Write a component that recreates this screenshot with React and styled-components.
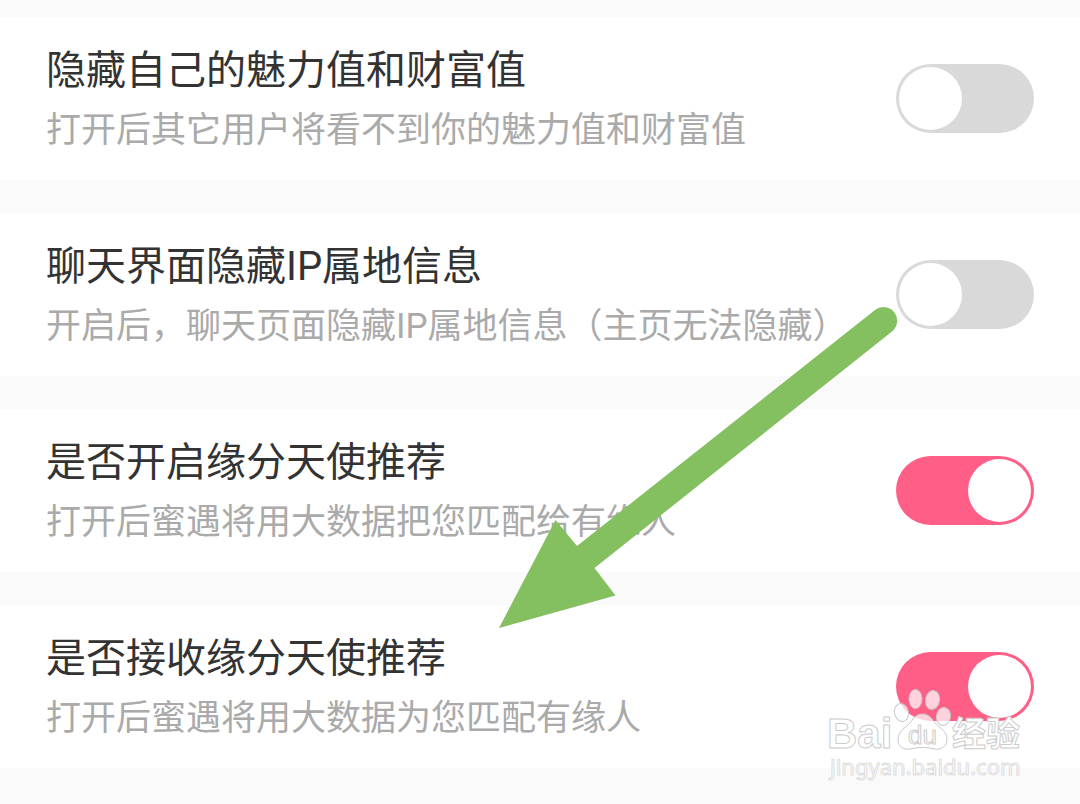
import React, { useState } from 'react';
import styled, { createGlobalStyle } from 'styled-components';

// Styles
const GlobalStyle = createGlobalStyle`
  * {
    box-sizing: border-box;
  }

  body {
    margin: 0;
    background: #fafafa;
    font-family: Roboto, 'Noto Sans CJK SC', sans-serif;
  }
`;

const Page = styled.main`
  position: relative;
  min-height: 100vh;
  padding: 17px 0 36px;
  overflow: hidden;
`;

const SettingList = styled.div`
  display: flex;
  flex-direction: column;
  gap: 33px;
`;

const SettingRow = styled.section`
  display: flex;
  justify-content: space-between;
  align-items: center;
  gap: 24px;
  padding: 18px 46px 19px;
  background: #ffffff;
`;

const SettingText = styled.div`
  flex: 1;
  min-width: 0;
  padding-top: 6px;
`;

const Title = styled.label`
  display: block;
  font-size: 40px;
  line-height: 60px;
  color: #333333;
`;

const Description = styled.p`
  margin: 0;
  font-size: 35px;
  line-height: 60px;
  color: #aaaaaa;
`;

const Switch = styled.input`
  appearance: none;
  flex: none;
  display: flex;
  justify-content: ${({ checked }) => (checked ? 'flex-end' : 'flex-start')};
  width: 138px;
  height: 69px;
  margin: 0;
  padding: 3px;
  border-radius: 35px;
  background: ${({ checked }) => (checked ? '#ff5f87' : '#d9d9d9')};
  cursor: pointer;

  &::before {
    content: '';
    width: 63px;
    height: 63px;
    border-radius: 50%;
    background: #ffffff;
  }
`;

const Arrow = styled.svg`
  position: absolute;
  top: 300px;
  left: 490px;
  pointer-events: none;
`;

const Watermark = styled.svg`
  position: absolute;
  right: 52px;
  bottom: 16px;
  pointer-events: none;
`;

const WatermarkText = styled.text`
  font-family: ${({ $family }) => $family || "'Liberation Sans'"}, sans-serif;
  font-size: ${({ $size }) => $size}px;
  font-weight: ${({ $weight }) => $weight || 700};
  fill: #ffffff;
  stroke: ${({ $stroke }) => $stroke || '#cccccc'};
  stroke-width: ${({ $outline }) => $outline || 1}px;
  stroke-linejoin: round;
`;

const settings = [
  {
    id: 'hide-charm',
    title: '隐藏自己的魅力值和财富值',
    description: '打开后其它用户将看不到你的魅力值和财富值',
    on: false,
  },
  {
    id: 'hide-ip',
    title: '聊天界面隐藏IP属地信息',
    description: '开启后，聊天页面隐藏IP属地信息（主页无法隐藏）',
    on: false,
  },
  {
    id: 'angel-recommend',
    title: '是否开启缘分天使推荐',
    description: '打开后蜜遇将用大数据把您匹配给有缘人',
    on: true,
  },
  {
    id: 'angel-receive',
    title: '是否接收缘分天使推荐',
    description: '打开后蜜遇将用大数据为您匹配有缘人',
    on: true,
  },
];

const Setting = ({ id, title, description, on }) => {
  const [checked, setChecked] = useState(on);

  return (
    <SettingRow>
      <SettingText>
        <Title htmlFor={id}>{title}</Title>
        <Description id={`${id}-text`}>{description}</Description>
      </SettingText>
      <Switch
        id={id}
        type="checkbox"
        role="switch"
        aria-describedby={`${id}-text`}
        checked={checked}
        onChange={(e) => setChecked(e.target.checked)}
      />
    </SettingRow>
  );
};

const BaiduMark = () => (
  <Watermark width="200" height="100" viewBox="0 0 200 100">
    <WatermarkText x="-1" y="60" $size={42}>Bai</WatermarkText>
    {/* paw */}
    <g fill="#ffffff" fillOpacity="0.72" stroke="#c8c8c8" strokeWidth="1">
      <ellipse cx="73.5" cy="24.5" rx="7" ry="9" transform="rotate(-14 73.5 24.5)" />
      <ellipse cx="87.5" cy="11" rx="6.5" ry="9.5" />
      <ellipse cx="104.5" cy="12" rx="7" ry="9.5" transform="rotate(10 104.5 12)" />
      <ellipse cx="115.5" cy="28.5" rx="7" ry="9" transform="rotate(10 115.5 28.5)" />
      <path d="M94.5 26 C86 26 84 34 79 38 C73 42 70 46 70 52 C70 59 76 62 82 61 C90 59 99 59 107 61 C114 62 119 58 119 51 C119 45 115 42 110 38 C105 34 103 26 94.5 26 Z" />
    </g>
    <WatermarkText x="80" y="56" $size={26} $weight={400}>du</WatermarkText>
    <WatermarkText x="124" y="58" $size={34} $family="'Noto Sans CJK SC'">经验</WatermarkText>
    <WatermarkText x="2" y="87" $size={22} $weight={400} $family="'Noto Sans'" $stroke="#dddddd">
      jingyan.baidu.com
    </WatermarkText>
  </Watermark>
);

const App = () => {
  return (
    <>
      <GlobalStyle />
      <Page>
        <SettingList>
          {settings.map((setting) => (
            <Setting key={setting.id} {...setting} />
          ))}
        </SettingList>
        <Arrow width="420" height="340" viewBox="0 0 420 340" aria-hidden="true">
          <path
            d="M9 328 L65.5 220 L87 246 L385 10 A13.5 13.5 0 0 1 402 31.5 L104.5 268 L125.5 295.5 Z"
            fill="#84bf60"
          />
        </Arrow>
        <BaiduMark />
      </Page>
    </>
  );
};

export default App;
